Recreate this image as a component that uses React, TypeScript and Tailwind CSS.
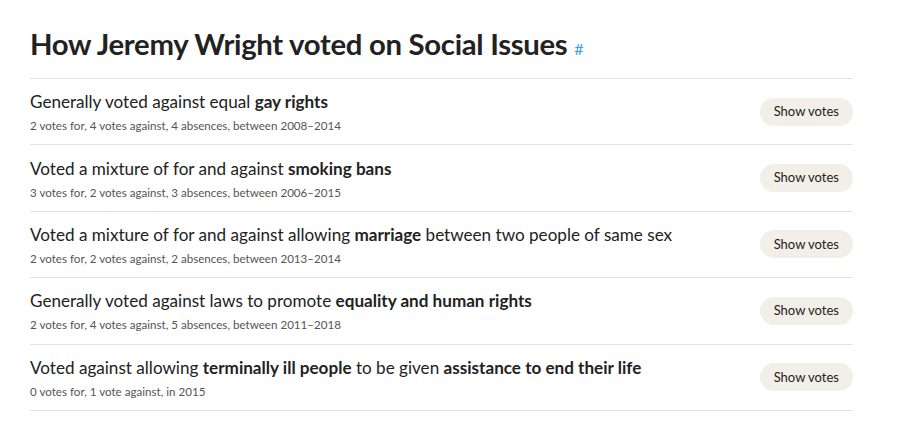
import React, { FC, ReactElement } from "react";

type Part = { t: string; b?: boolean };
type Policy = { parts: Part[]; summary: string };

const policies: Policy[] = [
  {
    parts: [{ t: "Generally voted against equal " }, { t: "gay rights", b: true }],
    summary: "2 votes for, 4 votes against, 4 absences, between 2008–2014",
  },
  {
    parts: [{ t: "Voted a mixture of for and against " }, { t: "smoking bans", b: true }],
    summary: "3 votes for, 2 votes against, 3 absences, between 2006–2015",
  },
  {
    parts: [
      { t: "Voted a mixture of for and against allowing " },
      { t: "marriage", b: true },
      { t: " between two people of same sex" },
    ],
    summary: "2 votes for, 2 votes against, 2 absences, between 2013–2014",
  },
  {
    parts: [
      { t: "Generally voted against laws to promote " },
      { t: "equality and human rights", b: true },
    ],
    summary: "2 votes for, 4 votes against, 5 absences, between 2011–2018",
  },
  {
    parts: [
      { t: "Voted against allowing " },
      { t: "terminally ill people", b: true },
      { t: " to be given " },
      { t: "assistance to end their life", b: true },
    ],
    summary: "0 votes for, 1 vote against, in 2015",
  },
];

const App: FC = (): ReactElement => {
  return (
    <div className="min-h-[423px] bg-white font-['Lato',sans-serif] text-[#222]">
      <div className="w-[823px] ml-[30px] pt-[24px]">
        <h2 className="text-[29.3px] leading-[40px] font-bold tracking-[-0.3px] pb-[9px]">
          How Jeremy Wright voted on Social Issues{" "}
          <a className="text-[16px] font-normal text-[#3a9cf2]">#</a>
        </h2>
        <ul className="border-t border-[#e4e2dc]">
          {policies.map((p, i) => (
            <li
              key={i}
              className="flex items-center justify-between border-b border-[#e4e2dc] h-[66.4px]"
            >
              <div className="pt-[2px]">
                <p className="text-[17.1px] leading-[24px]">
                  {p.parts.map((x, j) =>
                    x.b ? (
                      <strong key={j} className="font-bold">
                        {x.t}
                      </strong>
                    ) : (
                      <span key={j}>{x.t}</span>
                    )
                  )}
                </p>
                <p className="text-[11.6px] leading-[18px] text-[#555] mt-[3px]">{p.summary}</p>
              </div>
              <button className="rounded-full bg-[#f1efe8] text-[#222] text-[13px] h-[28px] px-[14px]">
                Show votes
              </button>
            </li>
          ))}
        </ul>
      </div>
    </div>
  );
};

export default App;
